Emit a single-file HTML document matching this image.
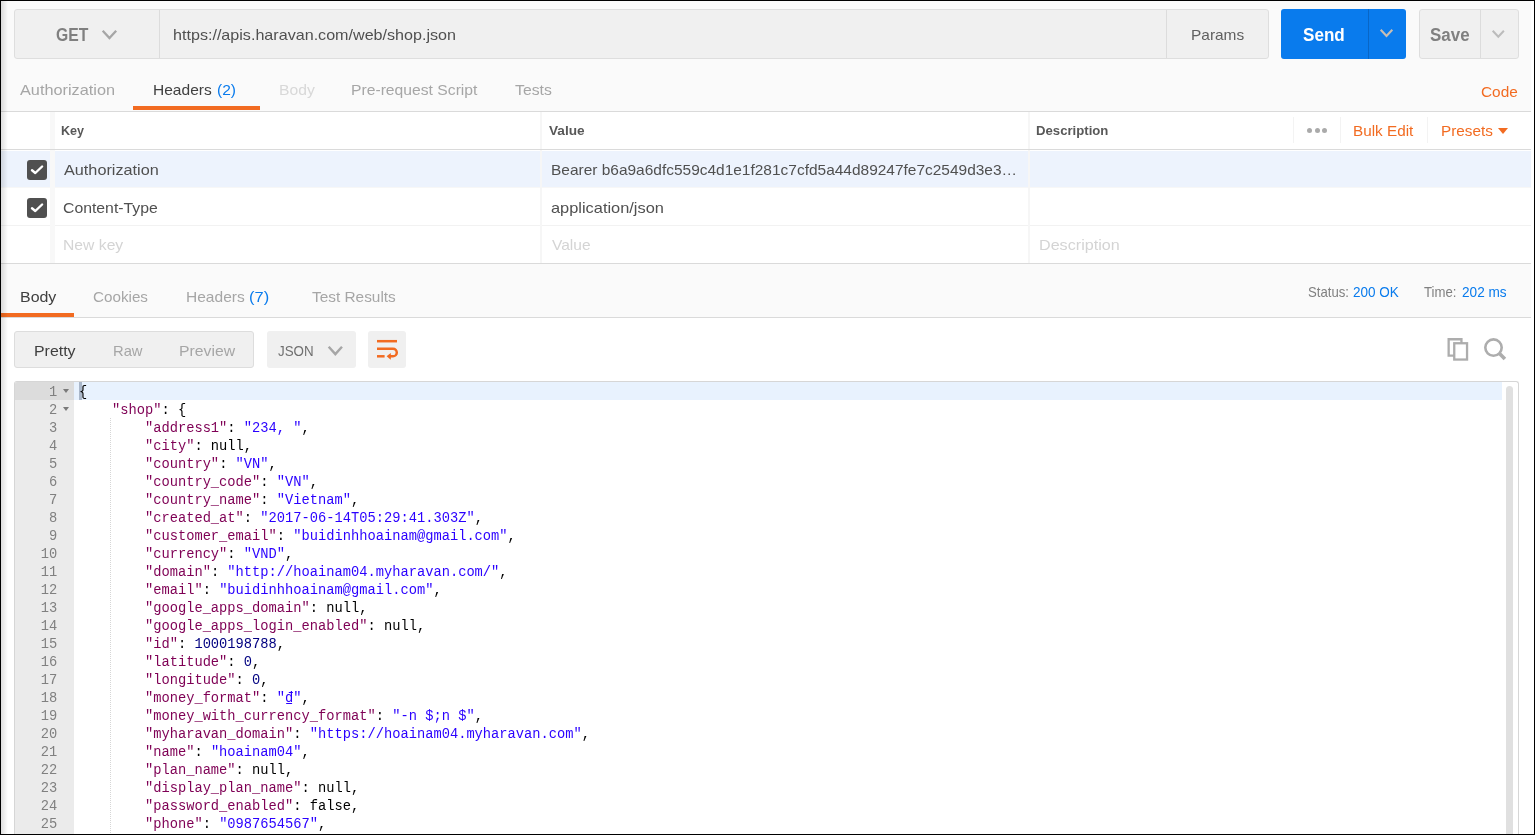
<!DOCTYPE html>
<html lang="en"><head><meta charset="utf-8"><title>Postman</title>
<style>
html,body{margin:0;padding:0}
body{width:1535px;height:835px;overflow:hidden;position:relative;background:#fafafa;font-family:'Liberation Sans', sans-serif;}
.a{position:absolute;box-sizing:border-box}
.t{position:absolute;white-space:pre;line-height:1;font-family:'Liberation Sans', sans-serif;transform-origin:0 0}
.code{position:absolute;left:79px;white-space:pre;font-family:'Liberation Mono', monospace;font-size:13.743px;line-height:18px;height:18px;color:#000}
.k{color:#7f0055} .s{color:#2a00ff} .n{color:#000080}
.ln{position:absolute;left:15.7px;width:41.5px;text-align:right;font-family:'Liberation Mono', monospace;font-size:13.743px;line-height:18px;height:18px;color:#808080}
.fold{position:absolute;left:62.7px;width:0;height:0;border-left:3.8px solid transparent;border-right:3.8px solid transparent;border-top:4px solid #7a7a7a}

</style></head><body><div id="root" style="position:absolute;left:0;top:0;width:1535px;height:835px;will-change:transform">
<div id="bg">
<div class="a" style="left:1px;top:112px;width:1530px;height:151px;background:#fff"></div>
<div class="a" style="left:1px;top:318px;width:1533px;height:516px;background:#fff"></div>
<div class="a" style="left:1531px;top:1px;width:3px;height:833px;background:#fff"></div>
</div>
<header id="request-bar">
<div class="a" style="left:14px;top:9px;width:1255px;height:50px;background:#f0f0f0;border:1px solid #dedede;border-radius:3px"></div>
<div class="a" style="left:159px;top:10px;width:1px;height:48px;background:#dcdcdc"></div>
<div class="a" style="left:1166px;top:10px;width:1px;height:48px;background:#dcdcdc"></div>
<div class="a" style="left:1281px;top:9px;width:125px;height:50px;background:#097bed;border-radius:3px"></div>
<div class="a" style="left:1368px;top:9px;width:1px;height:50px;background:#0866c6"></div>
<div class="a" style="left:1419px;top:9px;width:100px;height:50px;background:#f0f0f0;border:1px solid #dedede;border-radius:3px"></div>
<div class="a" style="left:1480px;top:10px;width:1px;height:48px;background:#dcdcdc"></div>
<svg class="a" style="left:99.6px;top:27.7px" width="18.9" height="12.9" viewBox="-2 -2 18.9 12.9"><path d="M0.7 0.7 L7.45 8 L14.2 0.7" fill="none" stroke="#a6a6a6" stroke-width="2.3" stroke-linecap="butt" stroke-linejoin="miter"/></svg>
<svg class="a" style="left:1378px;top:27.4px" width="17" height="11.8" viewBox="-2 -2 17 11.8"><path d="M0.7 0.7 L6.5 6.9 L12.3 0.7" fill="none" stroke="#c8beb4" stroke-width="2.1" stroke-linecap="butt" stroke-linejoin="miter"/></svg>
<svg class="a" style="left:1489.6px;top:27.7px" width="16.6" height="11.6" viewBox="-2 -2 16.6 11.6"><path d="M0.7 0.7 L6.3 6.7 L11.9 0.7" fill="none" stroke="#bcbcbc" stroke-width="2" stroke-linecap="butt" stroke-linejoin="miter"/></svg>
<div class="t" style="left:56.33px;top:27.19px;font-size:17.5px;font-weight:700;color:#808080;transform:scaleX(0.8982)">GET</div>
<div class="t" style="left:172.93px;top:27.30px;font-size:15px;font-weight:400;color:#505050;transform:scaleX(1.0742)">https://apis.haravan.com/web/shop.json</div>
<div class="t" style="left:1190.91px;top:27.30px;font-size:15px;font-weight:400;color:#606060;transform:scaleX(1.0294)">Params</div>
<div class="t" style="left:1303.01px;top:27.19px;font-size:17.5px;font-weight:700;color:#ffffff;transform:scaleX(0.976)">Send</div>
<div class="t" style="left:1430.32px;top:27.19px;font-size:17.5px;font-weight:700;color:#808080;transform:scaleX(0.968)">Save</div>
</header>
<nav id="request-tabs">
<div class="a" style="left:133px;top:106px;width:127px;height:4px;background:#f26b21"></div>
<div class="t" style="left:20.37px;top:81.90px;font-size:15px;font-weight:400;color:#a6a6a6;transform:scaleX(1.0849)">Authorization</div>
<div class="t" style="left:153.03px;top:81.90px;font-size:15px;font-weight:400;color:#404040;transform:scaleX(1.0359)">Headers</div>
<div class="t" style="left:217.16px;top:81.90px;font-size:15px;font-weight:400;color:#097bed;transform:scaleX(1.0364)">(2)</div>
<div class="t" style="left:279.0px;top:81.90px;font-size:15px;font-weight:400;color:#d8d8d8;transform:scaleX(1.0471)">Body</div>
<div class="t" style="left:350.99px;top:81.90px;font-size:15px;font-weight:400;color:#a6a6a6;transform:scaleX(1.046)">Pre-request Script</div>
<div class="t" style="left:515.04px;top:81.90px;font-size:15px;font-weight:400;color:#a6a6a6;transform:scaleX(1.0511)">Tests</div>
<div class="t" style="left:1481.43px;top:84.10px;font-size:15px;font-weight:400;color:#f26b21;transform:scaleX(1.0261)">Code</div>
</nav>
<section id="headers-table">
<div class="a" style="left:1px;top:151px;width:1530px;height:36px;background:#edf3fd"></div>
<div class="a" style="left:1px;top:187px;width:1530px;height:1px;background:#f7f7f7"></div>
<div class="a" style="left:1px;top:225px;width:1530px;height:1px;background:#f2f2f2"></div>
<div class="a" style="left:50px;top:112px;width:5px;height:151px;background:#f8f8f8"></div>
<div class="a" style="left:540px;top:112px;width:2px;height:151px;background:#f6f6f6"></div>
<div class="a" style="left:1028px;top:112px;width:2px;height:151px;background:#f6f6f6"></div>
<div class="a" style="left:1px;top:111px;width:1530px;height:1px;background:#dadada"></div>
<div class="a" style="left:1px;top:149px;width:1530px;height:1px;background:#dadada"></div>
<div class="a" style="left:1px;top:263px;width:1530px;height:1px;background:#dadada"></div>
<div class="a" style="left:1293px;top:117px;width:1px;height:26px;background:#f3f3f3"></div>
<div class="a" style="left:1340px;top:117px;width:1px;height:26px;background:#f3f3f3"></div>
<div class="a" style="left:1427px;top:117px;width:1px;height:26px;background:#f3f3f3"></div>
<svg class="a" style="left:27px;top:160px" width="20" height="20" viewBox="0 0 20 20"><rect width="20" height="20" rx="3" fill="#505050"/><path d="M5 10.3 L8.3 13 L15.1 6.5" fill="none" stroke="#fff" stroke-width="2.4" stroke-linecap="round" stroke-linejoin="round"/></svg>
<svg class="a" style="left:27px;top:198px" width="20" height="20" viewBox="0 0 20 20"><rect width="20" height="20" rx="3" fill="#505050"/><path d="M5 10.3 L8.3 13 L15.1 6.5" fill="none" stroke="#fff" stroke-width="2.4" stroke-linecap="round" stroke-linejoin="round"/></svg>
<div class="a" style="left:1306.9px;top:127.9px;width:5px;height:5px;background:#aaa;border-radius:50%"></div>
<div class="a" style="left:1314.6px;top:127.9px;width:5px;height:5px;background:#aaa;border-radius:50%"></div>
<div class="a" style="left:1322.1px;top:127.9px;width:5px;height:5px;background:#aaa;border-radius:50%"></div>
<div class="a" style="left:1498px;top:128px;width:0;height:0;border-left:5px solid transparent;border-right:5px solid transparent;border-top:6px solid #f26b21"></div>
<div class="t" style="left:60.88px;top:124.00px;font-size:13px;font-weight:700;color:#585858;transform:scaleX(0.9664)">Key</div>
<div class="t" style="left:549.24px;top:124.00px;font-size:13px;font-weight:700;color:#585858;transform:scaleX(1.0496)">Value</div>
<div class="t" style="left:1036.04px;top:124.00px;font-size:13px;font-weight:700;color:#585858;transform:scaleX(1.012)">Description</div>
<div class="t" style="left:1353.08px;top:123.20px;font-size:15px;font-weight:400;color:#f26b21;transform:scaleX(1.0189)">Bulk Edit</div>
<div class="t" style="left:1441.22px;top:123.20px;font-size:15px;font-weight:400;color:#f26b21;transform:scaleX(1.0204)">Presets</div>
<div class="t" style="left:63.96px;top:161.90px;font-size:15px;font-weight:400;color:#505050;transform:scaleX(1.0826)">Authorization</div>
<div class="t" style="left:550.91px;top:162.10px;font-size:15px;font-weight:400;color:#505050;transform:scaleX(1.0309)">Bearer b6a9a6dfc559c4d1e1f281c7cfd5a44d89247fe7c2549d3e3…</div>
<div class="t" style="left:63.41px;top:199.50px;font-size:15px;font-weight:400;color:#505050;transform:scaleX(1.0524)">Content-Type</div>
<div class="t" style="left:551.38px;top:199.70px;font-size:15px;font-weight:400;color:#505050;transform:scaleX(1.0919)">application/json</div>
<div class="t" style="left:63.29px;top:237.10px;font-size:15px;font-weight:400;color:#d4d4d4;transform:scaleX(1.0471)">New key</div>
<div class="t" style="left:552.2px;top:236.90px;font-size:15px;font-weight:400;color:#d4d4d4;transform:scaleX(1.0367)">Value</div>
<div class="t" style="left:1038.86px;top:236.90px;font-size:15px;font-weight:400;color:#d4d4d4;transform:scaleX(1.0755)">Description</div>
</section>
<nav id="response-tabs">
<div class="a" style="left:1px;top:317px;width:1530px;height:1px;background:#dadada"></div>
<div class="a" style="left:1px;top:313px;width:73px;height:4px;background:#f26b21"></div>
<div class="t" style="left:19.95px;top:288.70px;font-size:15px;font-weight:400;color:#404040;transform:scaleX(1.0631)">Body</div>
<div class="t" style="left:93.04px;top:288.70px;font-size:15px;font-weight:400;color:#a6a6a6;transform:scaleX(1.0145)">Cookies</div>
<div class="t" style="left:186.04px;top:288.70px;font-size:15px;font-weight:400;color:#a6a6a6;transform:scaleX(1.0357)">Headers</div>
<div class="t" style="left:249.2px;top:288.70px;font-size:15px;font-weight:400;color:#097bed;transform:scaleX(1.097)">(7)</div>
<div class="t" style="left:311.94px;top:288.70px;font-size:15px;font-weight:400;color:#a6a6a6;transform:scaleX(1.0259)">Test Results</div>
<div class="t" style="left:1308.38px;top:286.26px;font-size:13.75px;font-weight:400;color:#808080;transform:scaleX(0.9571)">Status:</div>
<div class="t" style="left:1353.26px;top:286.26px;font-size:13.75px;font-weight:400;color:#097bed;transform:scaleX(0.982)">200 OK</div>
<div class="t" style="left:1424.08px;top:286.26px;font-size:13.75px;font-weight:400;color:#808080;transform:scaleX(0.9593)">Time:</div>
<div class="t" style="left:1462.46px;top:286.26px;font-size:13.75px;font-weight:400;color:#097bed;transform:scaleX(0.9897)">202 ms</div>
</nav>
<div id="response-toolbar">
<div class="a" style="left:14px;top:331px;width:240px;height:37px;background:#f0f0f0;border:1px solid #dddddd;border-radius:3px"></div>
<div class="a" style="left:267px;top:331px;width:89px;height:37px;background:#f0f0f0;border-radius:3px"></div>
<div class="a" style="left:368px;top:331px;width:38px;height:37px;background:#f0f0f0;border-radius:3px"></div>
<svg class="a" style="left:325.8px;top:343.5px" width="18.7" height="13" viewBox="-2 -2 18.7 13"><path d="M0.7 0.7 L7.35 8.1 L14 0.7" fill="none" stroke="#a6a6a6" stroke-width="2.4" stroke-linecap="butt" stroke-linejoin="miter"/></svg>
<svg class="a" style="left:368px;top:331px" width="38" height="38" viewBox="0 0 38 38"><g fill="none" stroke="#f26b21" stroke-width="2.5"><path d="M9 10.2 H29"/><path d="M9 17.7 H25 a3.8 3.8 0 0 1 0 7.6 H21"/><path d="M9 25.3 H16.6"/></g><path d="M18.6 25.3 L22.8 21.9 V28.7 Z" fill="#f26b21"/></svg>
<svg class="a" style="left:1447px;top:338px" width="23" height="24" viewBox="0 0 23 24"><g fill="none" stroke="#adadad" stroke-width="2.3"><path d="M7.25 17.65 H1.65 V1.25 H14.45 V5.25"/><rect x="7.25" y="5.25" width="12.8" height="16.3"/></g></svg>
<svg class="a" style="left:1484px;top:338px" width="24" height="24" viewBox="0 0 24 24"><circle cx="9.5" cy="9.6" r="8.2" fill="none" stroke="#adadad" stroke-width="2.6"/><path d="M15 15.1 L20.9 21" stroke="#adadad" stroke-width="3.6"/></svg>
<div class="t" style="left:33.68px;top:343.10px;font-size:15px;font-weight:400;color:#404040;transform:scaleX(1.0591)">Pretty</div>
<div class="t" style="left:112.97px;top:343.10px;font-size:15px;font-weight:400;color:#a6a6a6;transform:scaleX(0.9843)">Raw</div>
<div class="t" style="left:179.29px;top:343.10px;font-size:15px;font-weight:400;color:#a6a6a6;transform:scaleX(1.0519)">Preview</div>
<div class="t" style="left:278.39px;top:343.10px;font-size:15px;font-weight:400;color:#707070;transform:scaleX(0.8908)">JSON</div>
</div>
<section id="editor">
<div class="a" style="left:14px;top:381px;width:1505px;height:454px;background:#fff;border:1px solid #d6d6d6;border-bottom:none;border-radius:3px 3px 0 0"></div>
<div class="a" style="left:15px;top:382px;width:59px;height:452px;background:#ebebeb;border-radius:2px 0 0 0"></div>
<div class="a" style="left:15px;top:382px;width:59px;height:18px;background:#dcdcdc;border-radius:2px 0 0 0"></div>
<div class="a" style="left:74px;top:382px;width:1428px;height:18px;background:#e8f2fe"></div>
<div class="a" style="left:79px;top:382px;width:3px;height:18px;background:#aab7c9"></div>
<div class="a" style="left:1506px;top:386px;width:7px;height:460px;background:#e0e0e0;border-radius:4px"></div>
<div class="a" style="left:110px;top:418px;width:1px;height:416px;background:repeating-linear-gradient(to bottom,#d6d6d6 0,#d6d6d6 1px,transparent 1px,transparent 2px)"></div>
<div class="ln" style="top:384px">1</div>
<div class="fold" style="top:389px"></div>
<div class="code" style="top:384px">{</div>
<div class="ln" style="top:402px">2</div>
<div class="fold" style="top:407px"></div>
<div class="code" style="top:402px">    <span class="k">&quot;shop&quot;</span>: {</div>
<div class="ln" style="top:420px">3</div>
<div class="code" style="top:420px">        <span class="k">&quot;address1&quot;</span>: <span class="s">&quot;234, &quot;</span>,</div>
<div class="ln" style="top:438px">4</div>
<div class="code" style="top:438px">        <span class="k">&quot;city&quot;</span>: null,</div>
<div class="ln" style="top:456px">5</div>
<div class="code" style="top:456px">        <span class="k">&quot;country&quot;</span>: <span class="s">&quot;VN&quot;</span>,</div>
<div class="ln" style="top:474px">6</div>
<div class="code" style="top:474px">        <span class="k">&quot;country_code&quot;</span>: <span class="s">&quot;VN&quot;</span>,</div>
<div class="ln" style="top:492px">7</div>
<div class="code" style="top:492px">        <span class="k">&quot;country_name&quot;</span>: <span class="s">&quot;Vietnam&quot;</span>,</div>
<div class="ln" style="top:510px">8</div>
<div class="code" style="top:510px">        <span class="k">&quot;created_at&quot;</span>: <span class="s">&quot;2017-06-14T05:29:41.303Z&quot;</span>,</div>
<div class="ln" style="top:528px">9</div>
<div class="code" style="top:528px">        <span class="k">&quot;customer_email&quot;</span>: <span class="s">&quot;buidinhhoainam@gmail.com&quot;</span>,</div>
<div class="ln" style="top:546px">10</div>
<div class="code" style="top:546px">        <span class="k">&quot;currency&quot;</span>: <span class="s">&quot;VND&quot;</span>,</div>
<div class="ln" style="top:564px">11</div>
<div class="code" style="top:564px">        <span class="k">&quot;domain&quot;</span>: <span class="s">&quot;http://hoainam04.myharavan.com/&quot;</span>,</div>
<div class="ln" style="top:582px">12</div>
<div class="code" style="top:582px">        <span class="k">&quot;email&quot;</span>: <span class="s">&quot;buidinhhoainam@gmail.com&quot;</span>,</div>
<div class="ln" style="top:600px">13</div>
<div class="code" style="top:600px">        <span class="k">&quot;google_apps_domain&quot;</span>: null,</div>
<div class="ln" style="top:618px">14</div>
<div class="code" style="top:618px">        <span class="k">&quot;google_apps_login_enabled&quot;</span>: null,</div>
<div class="ln" style="top:636px">15</div>
<div class="code" style="top:636px">        <span class="k">&quot;id&quot;</span>: <span class="n">1000198788</span>,</div>
<div class="ln" style="top:654px">16</div>
<div class="code" style="top:654px">        <span class="k">&quot;latitude&quot;</span>: <span class="n">0</span>,</div>
<div class="ln" style="top:672px">17</div>
<div class="code" style="top:672px">        <span class="k">&quot;longitude&quot;</span>: <span class="n">0</span>,</div>
<div class="ln" style="top:690px">18</div>
<div class="code" style="top:690px">        <span class="k">&quot;money_format&quot;</span>: <span class="s">&quot;₫&quot;</span>,</div>
<div class="ln" style="top:708px">19</div>
<div class="code" style="top:708px">        <span class="k">&quot;money_with_currency_format&quot;</span>: <span class="s">&quot;-n $;n $&quot;</span>,</div>
<div class="ln" style="top:726px">20</div>
<div class="code" style="top:726px">        <span class="k">&quot;myharavan_domain&quot;</span>: <span class="s">&quot;https://hoainam04.myharavan.com&quot;</span>,</div>
<div class="ln" style="top:744px">21</div>
<div class="code" style="top:744px">        <span class="k">&quot;name&quot;</span>: <span class="s">&quot;hoainam04&quot;</span>,</div>
<div class="ln" style="top:762px">22</div>
<div class="code" style="top:762px">        <span class="k">&quot;plan_name&quot;</span>: null,</div>
<div class="ln" style="top:780px">23</div>
<div class="code" style="top:780px">        <span class="k">&quot;display_plan_name&quot;</span>: null,</div>
<div class="ln" style="top:798px">24</div>
<div class="code" style="top:798px">        <span class="k">&quot;password_enabled&quot;</span>: false,</div>
<div class="ln" style="top:816px">25</div>
<div class="code" style="top:816px">        <span class="k">&quot;phone&quot;</span>: <span class="s">&quot;0987654567&quot;</span>,</div>
</section>
<div id="frame">
<div class="a" style="left:1px;top:1px;width:7px;height:833px;background:linear-gradient(to right,rgba(0,0,0,0.13),rgba(0,0,0,0))"></div>
<div class="a" style="left:0px;top:0px;width:1535px;height:1px;background:#000"></div>
<div class="a" style="left:0px;top:834px;width:1535px;height:1px;background:#000"></div>
<div class="a" style="left:0px;top:0px;width:1px;height:835px;background:#000"></div>
<div class="a" style="left:1534px;top:0px;width:1px;height:835px;background:#000"></div>
</div>
</div></body></html>
